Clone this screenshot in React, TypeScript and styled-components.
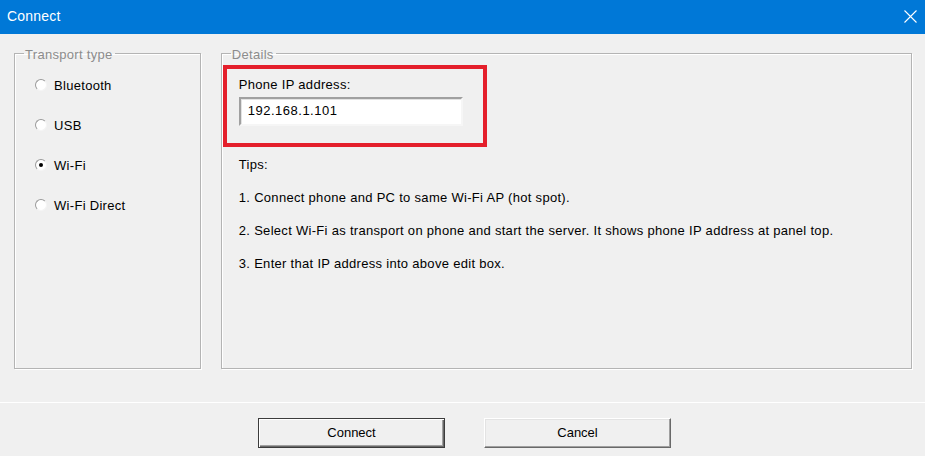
import React, { useState } from "react";
import styled, { createGlobalStyle } from "styled-components";

const GlobalStyle = createGlobalStyle`
    html, body {
        margin: 0;
        padding: 0;
        background: #f0f0f0;
    }
    * {
        box-sizing: border-box;
    }
`

const Window = styled.div`
    width: 925px;
    height: 456px;
    background: #f0f0f0;
    font-family: "Liberation Sans", Arial, sans-serif;
    font-size: 13px;
    color: #000;
    display: flex;
    flex-direction: column;
    overflow: hidden;
`
const TitleBar = styled.div`
    height: 34px;
    background: #0078d7;
    color: #fff;
    display: flex;
    align-items: center;
    justify-content: space-between;
    padding: 0 8px 2px 7px;
    font-size: 14px;
    letter-spacing: 0.2px;
`
const CloseButton = styled.button`
    border: none;
    background: transparent;
    padding: 0;
    width: 14px;
    height: 14px;
    display: flex;
    align-items: center;
    justify-content: center;
`
const Body = styled.div`
    flex: 1;
    display: flex;
    flex-direction: column;
    letter-spacing: 0.3px;
`
const Groups = styled.div`
    display: flex;
    gap: 20px;
    padding: 10px 13px 0 14px;
`
const Group = styled.fieldset<{ $width: number }>`
    width: ${props => props.$width}px;
    height: 325px;
    margin: 0;
    padding: 0;
    border: 1px solid #b4b4b4;
    box-shadow: 1px 1px 0 #fff, inset 1px 1px 0 #fff;
    min-width: 0;
`
const Legend = styled.legend`
    color: #8c8c8c;
    padding: 4px 2px 0 1px;
    margin-left: 9px;
    line-height: 14px;
`
const RadioList = styled.div`
    display: flex;
    flex-direction: column;
    gap: 24px;
    padding: 15px 0 0 20px;
`
const RadioRow = styled.label`
    display: flex;
    align-items: center;
    height: 16px;
    gap: 7px;
`
const RadioCircle = styled.span<{ $checked: boolean }>`
    width: 12px;
    height: 12px;
    border-radius: 50%;
    background: #fff;
    border: 1px solid;
    border-color: #9a9a9a #f4f4f4 #f4f4f4 #9a9a9a;
    display: flex;
    align-items: center;
    justify-content: center;
    margin-top: -1px;
    &::after {
        content: "";
        width: 4px;
        height: 4px;
        border-radius: 50%;
        background: ${props => props.$checked ? "#000" : "transparent"};
    }
`
const Highlight = styled.div`
    width: 264px;
    height: 82px;
    margin: 3px 0 0 1px;
    border: 4px solid #e41f2b;
    padding: 8px 0 0 12px;
`
const FieldLabel = styled.div`
    line-height: 16px;
    margin-bottom: 4px;
`
const IpInput = styled.input`
    width: 224px;
    height: 29px;
    background: #fff;
    border: 2px solid;
    border-color: #a0a0a0 #f6f6f6 #f6f6f6 #a0a0a0;
    box-shadow: inset 1px 1px 0 #e3e3e3;
    font-family: "Liberation Sans", Arial, sans-serif;
    font-size: 13px;
    letter-spacing: 0.5px;
    padding: 0 0 2px 7px;
    outline: none;
    color: #000;
`
const Tips = styled.div`
    display: flex;
    flex-direction: column;
    gap: 17px;
    margin-top: 10px;
    padding-left: 17px;
    line-height: 16px;
`
const Separator = styled.div`
    margin-top: 33px;
    height: 1px;
    background: #fff;
`
const Footer = styled.div`
    display: flex;
    justify-content: center;
    gap: 39px;
    padding: 15px 0 0 4px;
`
const DialogButton = styled.button<{ $default?: boolean }>`
    width: 187px;
    height: 30px;
    background: #f0f0f0;
    font-family: "Liberation Sans", Arial, sans-serif;
    font-size: 13px;
    color: #000;
    padding: 0 0 1px;
    border: 1px solid;
    border-color: ${props => props.$default ? "#3c3c3c" : "#fff #696969 #696969 #fff"};
    box-shadow: ${props => props.$default
        ? "inset 1px 1px 0 #fff, inset -1px -1px 0 #696969, inset -2px -2px 0 #a0a0a0"
        : "inset -1px -1px 0 #a0a0a0, inset 1px 1px 0 #e3e3e3"};
`

const transports = ["Bluetooth", "USB", "Wi-Fi", "Wi-Fi Direct"];

const tips = [
    "1. Connect phone and PC to same Wi-Fi AP (hot spot).",
    "2. Select Wi-Fi as transport on phone and start the server. It shows phone IP address at panel top.",
    "3. Enter that IP address into above edit box.",
];

function App() {
    const [transport, setTransport] = useState("Wi-Fi");
    const [ip, setIp] = useState("192.168.1.101");

    return (
        <Window>
            <GlobalStyle />
            <TitleBar>
                <span>Connect</span>
                <CloseButton>
                    <svg width="13" height="13" viewBox="0 0 13 13">
                        <path d="M0.5 0.5 L12.5 12.5 M12.5 0.5 L0.5 12.5" stroke="#fff" strokeWidth="1.1" />
                    </svg>
                </CloseButton>
            </TitleBar>
            <Body>
                <Groups>
                    <Group $width={187}>
                        <Legend>Transport type</Legend>
                        <RadioList>
                            {transports.map(t => (
                                <RadioRow key={t} onClick={() => setTransport(t)}>
                                    <RadioCircle $checked={transport === t} />
                                    {t}
                                </RadioRow>
                            ))}
                        </RadioList>
                    </Group>
                    <Group $width={692}>
                        <Legend>Details</Legend>
                        <Highlight>
                            <FieldLabel>Phone IP address:</FieldLabel>
                            <IpInput value={ip} onChange={e => setIp(e.target.value)} />
                        </Highlight>
                        <Tips>
                            <span>Tips:</span>
                            {tips.map(tip => <span key={tip}>{tip}</span>)}
                        </Tips>
                    </Group>
                </Groups>
                <Separator />
                <Footer>
                    <DialogButton $default>Connect</DialogButton>
                    <DialogButton>Cancel</DialogButton>
                </Footer>
            </Body>
        </Window>
    )
}

export default App;
